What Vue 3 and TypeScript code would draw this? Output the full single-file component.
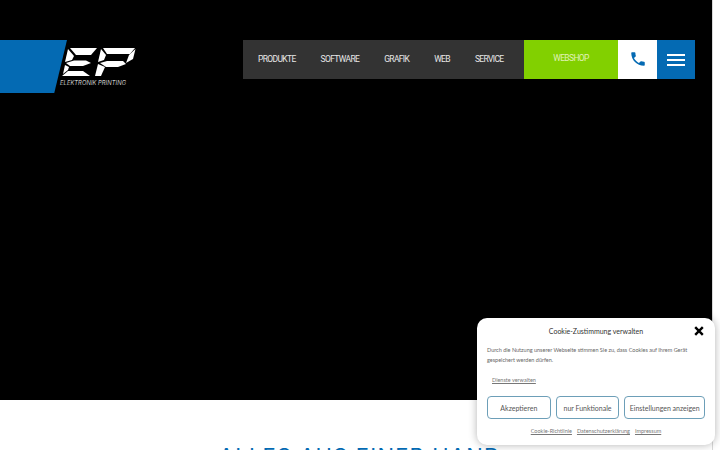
<script setup lang="ts">
const navItems: string[] = ['PRODUKTE', 'SOFTWARE', 'GRAFIK', 'WEB', 'SERVICE']
</script>

<template>
  <div class="page">
    <main class="content">
      <section class="hero">
        <header class="header">
          <div class="brand">
            <div class="brand-blue"></div>
            <div class="logo">
              <svg class="logo-mark" viewBox="0 0 76 34" width="76" height="34" aria-hidden="true">
                <g fill="#fff">
                  <polygon points="10,2 37,2 31,9 16,9" />
                  <polygon points="8,3 14,10 12,14 5,16" />
                  <polygon points="6,17 14,14.500 26,14.500 31,17 23,20 10,20" />
                  <polygon points="5,19 9,21 8,24 3,28" />
                  <polygon points="2,30 8,25 23,25 30,30" />
                  <polygon points="43,2 75,2 70,8 47,8" />
                  <polygon points="41,3 46,9 44,14 38,16" />
                  <polygon points="75.500,3 73,13 66,17 69,9" />
                  <polygon points="40,17 47,15 63,15 66,18 58,21 46,21" />
                  <polygon points="38,18 45,21 41,30 35,30" />
                </g>
              </svg>
              <span class="logo-text">ELEKTRONIK PRINTING</span>
            </div>
          </div>
          <nav class="nav">
            <div class="nav-links">
              <a v-for="item in navItems" :key="item" class="nav-link">{{ item }}</a>
            </div>
            <a class="shop">WEBSHOP</a>
            <a class="phone">
              <svg viewBox="0 0 24 24" width="18" height="18" aria-hidden="true">
                <path fill="#046ab3" d="M6.6 10.8c1.4 2.8 3.8 5.100 6.600 6.600l2.200-2.200c.3-.3.700-.4 1-.2 1.100.4 2.300.6 3.600.6.600 0 1 .4 1 1V20c0 .6-.4 1-1 1C10.600 21 3 13.400 3 4c0-.6.400-1 1-1h3.500c.6 0 1 .4 1 1 0 1.300.2 2.500.6 3.600.1.300 0 .7-.2 1z" />
              </svg>
            </a>
            <a class="menu">
              <span></span><span></span><span></span>
            </a>
          </nav>
        </header>
      </section>
      <section class="intro">
        <h1 class="title">ALLES AUS EINER HAND</h1>
      </section>
    </main>
    <aside class="scrollbar"></aside>
    <div class="cookie">
      <div class="cookie-head">
        <span class="cookie-title">Cookie-Zustimmung verwalten</span>
        <svg class="cookie-close" viewBox="0 0 10 10" width="10" height="10" aria-hidden="true">
          <path d="M1.200 1.200 8.800 8.800M8.800 1.200 1.200 8.800" stroke="#000" stroke-width="2.400" />
        </svg>
      </div>
      <p class="cookie-body">Durch die Nutzung unserer Webseite stimmen Sie zu, dass Cookies auf Ihrem Gerät gespeichert werden dürfen.</p>
      <a class="cookie-manage">Dienste verwalten</a>
      <div class="cookie-buttons">
        <button class="btn btn-a">Akzeptieren</button>
        <button class="btn btn-b">nur Funktionale</button>
        <button class="btn btn-c">Einstellungen anzeigen</button>
      </div>
      <div class="cookie-links">
        <a>Cookie-Richtlinie</a>
        <a>Datenschutzerklärung</a>
        <a>Impressum</a>
      </div>
    </div>
  </div>
</template>

<style scoped>
.page {
  display: flex;
  width: 720px;
  height: 450px;
  overflow: hidden;
  position: relative;
  font-family: "Roboto", "Liberation Sans", sans-serif;
  background: #fff;
}
.content {
  width: 712px;
  flex: none;
  display: flex;
  flex-direction: column;
}
.scrollbar {
  flex: 1;
  background: #fff;
  border-left: 1px solid #d8d8d8;
}
.hero {
  height: 400px;
  flex: none;
  background: #000;
  padding-top: 40px;
  box-sizing: border-box;
}
.header {
  display: flex;
  justify-content: space-between;
  align-items: flex-start;
  padding-right: 17px;
}
.brand {
  display: flex;
  align-items: flex-start;
  height: 53px;
}
.brand-blue {
  width: 67px;
  height: 53px;
  background: #046ab3;
  clip-path: polygon(0 0, 100% 0, 81% 100%, 0 100%);
}
.logo {
  margin-left: -7px;
  margin-top: 6px;
  display: flex;
  flex-direction: column;
  width: 76px;
}
.logo-mark {
  display: block;
}
.logo-text {
  font-family: "Inter", sans-serif;
  font-size: 5.800px;
  font-style: italic;
  font-weight: 300;
  line-height: 8px;
  color: #fff;
  white-space: nowrap;
  letter-spacing: 0.1px;
  margin-top: -1px;
}
.nav {
  display: flex;
  height: 39px;
}
.nav-links {
  display: flex;
  align-items: center;
  gap: 25px;
  width: 281px;
  box-sizing: border-box;
  padding-left: 15px;
  background: #333;
}
.nav-link {
  color: #e8e8e8;
  font-size: 8.500px;
  font-weight: 400;
  letter-spacing: -0.65px;
  margin-top: -2px;
  white-space: nowrap;
}
.shop {
  width: 94px;
  background: #82d000;
  color: #e0f2b8;
  font-size: 8.500px;
  font-weight: 400;
  letter-spacing: -0.65px;
  display: flex;
  align-items: center;
  justify-content: center;
  padding-bottom: 3px;
  box-sizing: border-box;
}
.phone {
  width: 39px;
  background: #fff;
  display: flex;
  align-items: center;
  justify-content: center;
  padding-bottom: 2px;
  box-sizing: border-box;
}
.menu {
  width: 38px;
  background: #046ab3;
  display: flex;
  flex-direction: column;
  align-items: center;
  justify-content: center;
  gap: 3px;
}
.menu span {
  display: block;
  width: 18px;
  height: 2px;
  background: #fff;
}
.intro {
  flex: 1;
  background: #fff;
  display: flex;
  justify-content: center;
  padding-left: 8px;
  overflow: hidden;
}
.title {
  margin: 41px 0 0 0;
  font-family: "Inter", sans-serif;
  font-weight: 400;
  font-size: 22px;
  line-height: 30px;
  letter-spacing: 1.200px;
  color: #046ab3;
  white-space: nowrap;
}
.cookie {
  position: absolute;
  left: 477px;
  top: 318px;
  width: 238px;
  height: 127px;
  box-sizing: border-box;
  background: #fff;
  border-radius: 10px;
  box-shadow: 0 0 8px rgba(0, 0, 0, 0.3);
  padding: 0 10px;
  color: #444;
  font-family: "Lato", sans-serif;
  font-weight: 400;
}
.cookie-head {
  display: flex;
  justify-content: center;
  align-items: center;
  position: relative;
  height: 25px;
  font-size: 7px;
  color: #333;
}
.cookie-close {
  position: absolute;
  right: 1px;
  top: 8px;
}
.cookie-body {
  margin: 3px 0 0;
  font-size: 5.500px;
  line-height: 9.500px;
  color: #666;
}
.cookie-manage {
  display: block;
  margin: 11px 0 0 5px;
  font-size: 5.500px;
  line-height: 9px;
  color: #777;
  text-decoration: underline;
}
.cookie-buttons {
  display: flex;
  gap: 5px;
  margin-top: 11px;
}
.btn {
  height: 23px;
  padding: 0;
  box-sizing: border-box;
  background: #fff;
  border: 1px solid #6d9fb8;
  border-radius: 4px;
  font-family: "Lato", sans-serif;
  font-weight: 400;
  font-size: 7px;
  color: #555;
}
.btn-a, .btn-b { width: 64px; }
.btn-c { width: 81px; }
.cookie-links {
  display: flex;
  justify-content: center;
  gap: 5px;
  margin-top: 9px;
  font-size: 5.500px;
  color: #777;
}
.cookie-links a { text-decoration: underline; }
</style>
